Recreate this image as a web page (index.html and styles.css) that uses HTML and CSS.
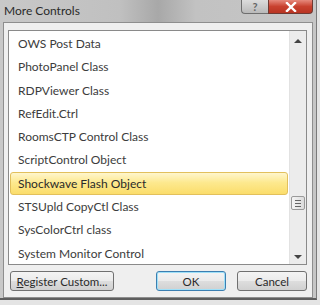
FILE: index.html
```html
<!DOCTYPE html>
<html>
<head>
<meta charset="utf-8">
<link rel="stylesheet" href="styles.css">
</head>
<body>
<div class="window">
  <div class="titlebar">
    <span class="title">More Controls</span>
    <div class="caption">
      <div class="cap help">?</div>
      <div class="cap close">
        <svg width="14" height="10" viewBox="0 0 14 10"><path d="M3 1 L11 9 M11 1 L3 9" stroke="#fff" stroke-width="2.4" stroke-linecap="square"/></svg>
      </div>
    </div>
  </div>
  <div class="client">
    <div class="listbox">
      <div class="items">
        <div class="item">OWS Post Data</div>
        <div class="item">PhotoPanel Class</div>
        <div class="item">RDPViewer Class</div>
        <div class="item">RefEdit.Ctrl</div>
        <div class="item">RoomsCTP Control Class</div>
        <div class="item">ScriptControl Object</div>
        <div class="item selected">Shockwave Flash Object</div>
        <div class="item">STSUpld CopyCtl Class</div>
        <div class="item">SysColorCtrl class</div>
        <div class="item">System Monitor Control</div>
      </div>
      <div class="scrollbar">
        <div class="arrow up"></div>
        <div class="track">
          <div class="thumb"><span></span><span></span><span></span></div>
        </div>
        <div class="arrow down"></div>
      </div>
    </div>
    <div class="buttons">
      <button class="btn register"><u>R</u>egister Custom...</button>
      <div class="spacer"></div>
      <button class="btn ok">OK</button>
      <button class="btn cancel">Cancel</button>
    </div>
  </div>
</div>
</body>
</html>
```

FILE: styles.css
```css
html, body {
  margin: 0;
  padding: 0;
  width: 320px;
  height: 305px;
  overflow: hidden;
  background: #e4e4e4;
  font-family: "Lato", "Open Sans", "DejaVu Sans", sans-serif;
}
.window {
  width: 317px;
  height: 300px;
  display: flex;
  flex-direction: column;
  background: linear-gradient(90deg, #c8c8c8 0%, #c0c0c0 38%, #a8a8a8 50%, #c2c2c2 62%, #c6c6c6 100%);
  border-right: 1px solid #7a7a7a;
  border-bottom: 2px solid #5e5e5e;
  box-sizing: border-box;
}
.titlebar {
  height: 22px;
  display: flex;
  align-items: flex-start;
  padding-left: 4px;
}
.title {
  font-size: 12px;
  color: #2a2a2a;
  margin-top: 3px;
}
.caption {
  margin-left: auto;
  margin-right: 3px;
  display: flex;
}
.cap {
  height: 14px;
  border: 1px solid #6e6e6e;
  border-top: none;
  box-sizing: border-box;
  display: flex;
  align-items: center;
  justify-content: center;
}
.help {
  width: 27px;
  border-radius: 0 0 0 4px;
  background: linear-gradient(#dcdcdc, #b9b9b9);
  color: #666;
  font-size: 11px;
  font-weight: bold;
  border-right: none;
}
.close {
  width: 45px;
  border-radius: 0 0 4px 0;
  background: linear-gradient(#e6897c, #c8412f 50%, #b93422);
  border-color: #6f3a33;
}
.client {
  flex: 1;
  margin: 0 3px 0 3px;
  background: #efefef;
  border: 1px solid #8e8e8e;
  box-sizing: border-box;
  display: flex;
  flex-direction: column;
  padding: 7px 5px 0 4px;
}
.listbox {
  height: 235px;
  border: 1px solid #8a8a8a;
  background: #fff;
  display: flex;
  box-sizing: border-box;
}
.items {
  flex: 1;
  padding: 1px 1px 0 1px;
}
.item {
  height: 23.3px;
  line-height: 22px;
  font-size: 12px;
  color: #3c3c3c;
  padding-left: 7px;
  box-sizing: border-box;
  border: 1px solid transparent;
}
.item.selected {
  background: linear-gradient(#fff6cd, #fde98f 45%, #fbdd6b);
  border-color: #e2c05c;
  border-radius: 3px;
  color: #2a2a2a;
}
.scrollbar {
  width: 16px;
  background: #ececec;
  border-left: 1px solid #e2e2e2;
  display: flex;
  flex-direction: column;
}
.arrow {
  height: 16px;
  display: flex;
  align-items: center;
  justify-content: center;
}
.arrow::after {
  content: "";
  width: 0;
  height: 0;
  border-left: 4px solid transparent;
  border-right: 4px solid transparent;
}
.up::after { border-bottom: 4px solid #444; margin-top: 4px; }
.down::after { border-top: 4px solid #444; margin-top: 2px; }
.track {
  flex: 1;
  position: relative;
}
.thumb {
  position: absolute;
  left: 1px;
  right: 1px;
  top: 149px;
  height: 14px;
  border: 1px solid #9a9a9a;
  border-radius: 2px;
  background: linear-gradient(90deg, #f4f4f4, #dcdcdc);
  display: flex;
  flex-direction: column;
  align-items: center;
  justify-content: center;
  gap: 2px;
  box-sizing: border-box;
}
.thumb span {
  width: 6px;
  height: 1px;
  background: #666;
}
.buttons {
  display: flex;
  align-items: center;
  padding: 6px 0 0 2px;
}
.btn {
  height: 20px;
  font-family: "Lato", "Open Sans", sans-serif;
  font-size: 11.5px;
  color: #2a2a2a;
  border: 1px solid #707070;
  border-radius: 3px;
  background: linear-gradient(#f4f4f4 0%, #ebebeb 48%, #dddddd 52%, #d0d0d0 100%);
  padding: 0;
  box-sizing: border-box;
}
.register { width: 104px; }
.spacer { flex: 1; }
.ok {
  width: 70px;
  border-color: #3c7fb1;
  box-shadow: inset 0 0 0 1px #9fe0f8;
  margin-right: 11px;
}
.cancel { width: 70px; }
```
